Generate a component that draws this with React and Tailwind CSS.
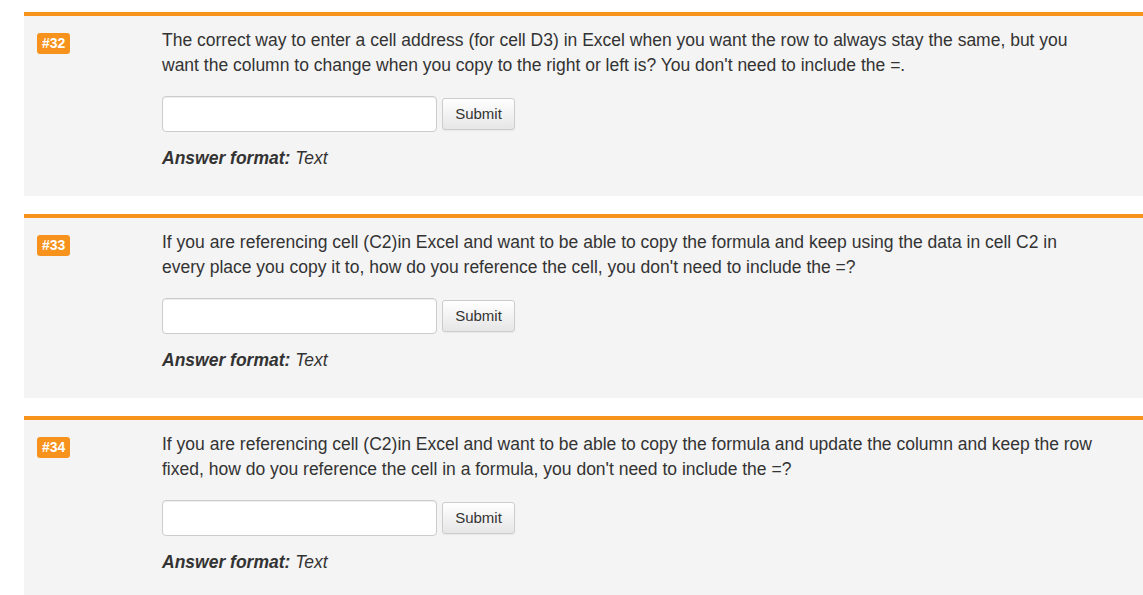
import React from 'react';

const questions = [
  {
    num: 32,
    text: 'The correct way to enter a cell address (for cell D3) in Excel when you want the row to always stay the same, but you want the column to change when you copy to the right or left is? You don\'t need to include the =.'
  },
  {
    num: 33,
    text: 'If you are referencing cell (C2)in Excel and want to be able to copy the formula and keep using the data in cell C2 in every place you copy it to, how do you reference the cell, you don\'t need to include the =?'
  },
  {
    num: 34,
    text: 'If you are referencing cell (C2)in Excel and want to be able to copy the formula and update the column and keep the row fixed, how do you reference the cell in a formula, you don\'t need to include the =?'
  }
];

function QuestionCard({ num, text }) {
  return (
    <div className="border-t-4 border-[#f7931d] bg-[#f4f4f4] mb-[18px]">
      <div className="flex pt-[12px] pb-[25px]">
        {/* numero */}
        <div className="w-[138px] shrink-0 pl-[13px] pt-[3px]">
          <span className="inline-block bg-[#f7931d] text-white font-bold text-[14px] leading-[21px] px-[5px] rounded-[3px]">
            #{num}
          </span>
        </div>

        {/* contenu */}
        <div className="w-[934px]">
          <p className="text-[17.5px] leading-[25px] text-[#333]">{text}</p>

          <div className="flex items-center gap-[5px] mt-[18px]">
            <input
              type="text"
              className="w-[275px] h-[36px] bg-white border border-[#ccc] rounded-[4px] shadow-[inset_0_1px_1px_rgba(0,0,0,0.075)] px-3 outline-none"
            />
            <button className="h-[32px] w-[73px] border border-[#ccc] rounded-[3px] bg-gradient-to-b from-white to-[#e6e6e6] text-[15px] text-[#333] shadow-[0_1px_1px_rgba(0,0,0,0.05)]">
              Submit
            </button>
          </div>

          <p className="mt-[14px] text-[17.5px] leading-[25px] text-[#333] italic">
            <strong className="font-bold">Answer format:</strong> Text
          </p>
        </div>
      </div>
    </div>
  );
}

export default function App() {
  return (
    <div
      className="min-h-screen bg-white pt-[12px] pl-[24px]"
      style={{ fontFamily: '"Liberation Sans", Arial, sans-serif' }}
    >
      {questions.map((q) => (
        <QuestionCard key={q.num} num={q.num} text={q.text} />
      ))}
    </div>
  );
}
